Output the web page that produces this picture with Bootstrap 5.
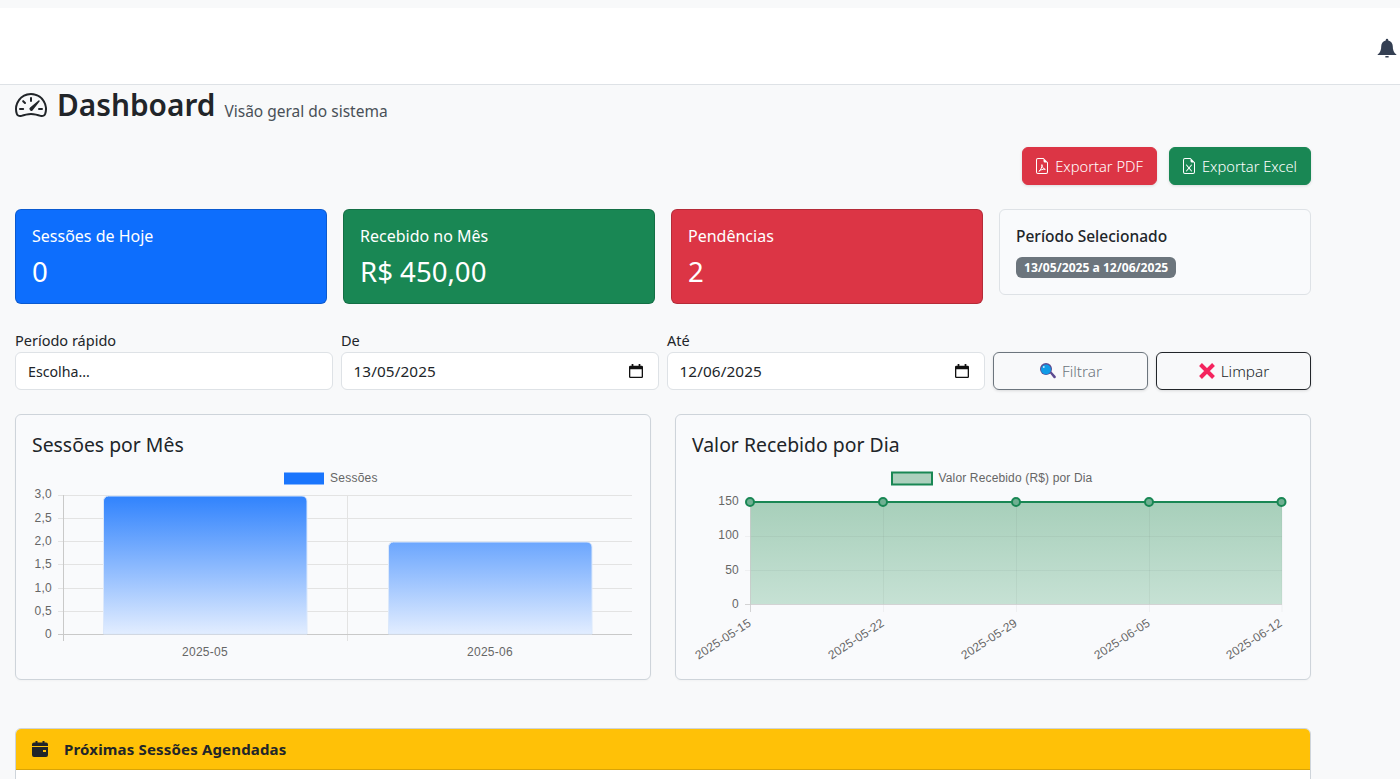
<!DOCTYPE html>
<html lang="pt-BR">
<head>
<meta charset="utf-8">
<title>Dashboard</title>
<link href="https://cdn.jsdelivr.net/npm/bootstrap@5.3.0/dist/css/bootstrap.min.css" rel="stylesheet">
<style>
html,body{height:779px;overflow:hidden}
body{background:#f8f9fa;font-family:"Noto Sans","Liberation Sans",sans-serif;color:#212529;padding-top:8px}
.topbar{height:77px;background:#fff;border-bottom:1px solid #dee2e6;padding-right:3px}
.bell-ic{width:20px;height:22px;fill:#343f52;margin-top:4px}
.page-wrap{width:1296px;margin-left:15px}
.page-head{height:32px;margin-top:4px;margin-bottom:26px}
.page-title{font-size:29.800px;font-weight:600;line-height:32px;margin:0}
.page-sub{font-size:15.500px;color:#495057;margin-left:9px;line-height:24px;align-self:flex-end;margin-bottom:-2px}
.dash-ic{width:32px;height:32px;margin-right:10px;fill:#212529}
.exp-btn{height:38px;font-size:14.700px;font-weight:300;padding:0 13px 0 11px;display:inline-flex;align-items:center;gap:5px;border-radius:6px;box-shadow:0 1px 3px rgba(0,0,0,.12)}
.exp-ic{width:16px;height:18px;fill:#fff}
.stat-name{font-size:16px;line-height:20px;margin-bottom:10px}
.stat-value{font-size:27.600px;line-height:31px}
.stat-plain{background:#f9fafc;border-color:#dee2e6}
.stat-plain .stat-name{font-size:15.500px;font-weight:500;margin-bottom:11px}
.date-pill{display:block;width:fit-content;height:21px;font-size:12.100px;font-weight:700;padding:4px 8px;border-radius:6px;line-height:13px}
.filter-row{margin-top:18px}
.field-label{font-size:14.500px;line-height:20px;margin-bottom:2px}
.field-box{height:38px;font-size:14.200px;color:#212529;background-color:#fff;padding:0 12px}
.date-box{font-size:15.300px;letter-spacing:.1px;padding-left:11.500px;background-image:url("data:image/svg+xml,%3Csvg xmlns='http://www.w3.org/2000/svg' viewBox='0 0 16 16'%3E%3Cpath fill='%23111' d='M3 0h2v2h6V0h2v2h1.5A1.5 1.5 0 0 1 16 3.5v11a1.5 1.5 0 0 1-1.500 1.500h-13A1.500 1.500 0 0 1 0 14.500v-11A1.500 1.500 0 0 1 1.500 2H3zM1.500 6v8.500h13V6z'/%3E%3C/svg%3E");background-repeat:no-repeat;background-position:right 15px center;background-size:14px}
.act-btn{height:38px;width:155px;font-size:15.300px;font-weight:300;padding:0;display:flex;align-items:center;justify-content:center;gap:5px;box-shadow:0 1px 3px rgba(0,0,0,.12)}
.act-ic{width:18px;height:18px}
.chart-row{margin-top:0}
.chart-box{background:#f9fafc;border-color:#ced4da;height:266px;box-shadow:0 1px 2px rgba(0,0,0,.03)}
.chart-title{font-size:19.400px;font-weight:400;line-height:28px;margin:0 0 7px}
.chart-svg{display:block;width:602px;height:197px;font-family:"Liberation Sans",sans-serif;font-size:12px;fill:#666;letter-spacing:.25px}
.legend-long{letter-spacing:.15px}
.next-card{margin-top:48px;height:200px;border-color:#ced4da}
.next-head{height:41px;background:#ffc107;font-size:15px;font-weight:700;letter-spacing:.17px;padding:0 16px;display:flex;align-items:center;gap:16px;border-bottom:1px solid #d9a406}
.cal-ic{width:16px;height:16px;fill:#212529}
</style>
</head>
<body>
<nav class="topbar d-flex justify-content-end align-items-center">
  <svg class="bell-ic" viewBox="0 0 16 16"><path d="M6.700 14.300h2.600v1.200H6.700zM8 .5a1 1 0 0 1 1 1v.4c2.200.5 3.600 2.300 3.600 4.500 0 3.200.8 5.300 2.900 6.800v.4H.5v-.4c2.100-1.500 2.900-3.600 2.900-6.800C3.400 4.200 4.800 2.400 7 1.900v-.4a1 1 0 0 1 1-1z"/></svg>
</nav>
<main class="page-wrap">
  <div class="page-head d-flex align-items-center">
    <svg class="dash-ic" viewBox="0 0 16 16"><path d="M8 4a.5.5 0 0 1 .5.5V6a.5.5 0 0 1-1 0V4.500A.5.5 0 0 1 8 4zM3.732 5.732a.5.5 0 0 1 .707 0l.915.914a.5.5 0 1 1-.708.708l-.914-.915a.5.5 0 0 1 0-.707zM2 10a.5.5 0 0 1 .5-.5h1.586a.5.5 0 0 1 0 1H2.500A.5.5 0 0 1 2 10zm9.500 0a.5.5 0 0 1 .5-.5h1.500a.5.5 0 0 1 0 1H12a.5.5 0 0 1-.5-.5zm.754-4.246a.389.389 0 0 0-.527-.020L7.547 9.310a.91.91 0 1 0 1.302 1.258l3.434-4.297a.389.389 0 0 0-.029-.518z"/><path d="M0 10a8 8 0 1 1 15.547 2.661c-.442 1.253-1.845 1.602-2.932 1.250C11.309 13.488 9.475 13 8 13c-1.474 0-3.310.488-4.615.911-1.087.352-2.490.003-2.932-1.250A7.988 7.988 0 0 1 0 10zm8-7a7 7 0 0 0-6.603 9.329c.203.575.923.876 1.680.630C4.397 12.533 6.358 12 8 12s3.604.532 4.923.96c.757.245 1.477-.056 1.680-.631A7 7 0 0 0 8 3z"/></svg>
    <h1 class="page-title">Dashboard</h1>
    <span class="page-sub">Visão geral do sistema</span>
  </div>
  <div class="d-flex justify-content-end gap-2 mb-4">
    <a class="btn btn-danger exp-btn me-1"><svg class="exp-ic" viewBox="0 0 16 16"><path d="M14 4.500V14a2 2 0 0 1-2 2H4a2 2 0 0 1-2-2V2a2 2 0 0 1 2-2h5.500L14 4.500zm-3 0A1.500 1.500 0 0 1 9.500 3V1H4a1 1 0 0 0-1 1v12a1 1 0 0 0 1 1h8a1 1 0 0 0 1-1V4.500h-2z"/><path d="M4.800 13.400C7 11.800 8.300 8.600 7.900 6.600 8 9 9.200 10.800 11.300 11.300 9 11 6.600 11.600 4.800 13.400z" fill="none" stroke="#fff" stroke-width="1"/></svg>Exportar PDF</a>
    <a class="btn btn-success exp-btn"><svg class="exp-ic" viewBox="0 0 16 16"><path d="M14 4.500V14a2 2 0 0 1-2 2H4a2 2 0 0 1-2-2V2a2 2 0 0 1 2-2h5.500L14 4.500zm-3 0A1.500 1.500 0 0 1 9.500 3V1H4a1 1 0 0 0-1 1v12a1 1 0 0 0 1 1h8a1 1 0 0 0 1-1V4.500h-2z"/><path d="M5.884 6.680a.5.5 0 1 0-.768.640L7.349 10l-2.233 2.680a.5.5 0 0 0 .768.640L8 10.781l2.116 2.540a.5.5 0 0 0 .768-.641L8.651 10l2.233-2.680a.5.5 0 0 0-.768-.640L8 9.219l-2.116-2.540z"/></svg>Exportar Excel</a>
  </div>
  <div class="row g-3 align-items-start">
    <div class="col-3"><div class="card text-bg-primary"><div class="card-body"><div class="stat-name">Sessões de Hoje</div><div class="stat-value">0</div></div></div></div>
    <div class="col-3"><div class="card text-bg-success"><div class="card-body"><div class="stat-name">Recebido no Mês</div><div class="stat-value">R$ 450,00</div></div></div></div>
    <div class="col-3"><div class="card text-bg-danger"><div class="card-body"><div class="stat-name">Pendências</div><div class="stat-value">2</div></div></div></div>
    <div class="col-3"><div class="card stat-plain"><div class="card-body"><div class="stat-name">Período Selecionado</div><span class="badge text-bg-secondary date-pill">13/05/2025 a 12/06/2025</span></div></div></div>
  </div>
  <form class="row g-2 align-items-end filter-row">
    <div class="col-3"><label class="field-label d-block">Período rápido</label><input class="form-control field-box" value="Escolha..."></div>
    <div class="col-3"><label class="field-label d-block">De</label><input class="form-control field-box date-box" value="13/05/2025"></div>
    <div class="col-3"><label class="field-label d-block">Até</label><input class="form-control field-box date-box" value="12/06/2025"></div>
    <div class="col-3 d-flex gap-2">
      <button type="button" class="btn btn-outline-secondary act-btn"><svg class="act-ic" viewBox="0 0 18 18"><path d="M10 10l1.500-1.500 5 5.500a1.200 1.200 0 0 1-2 1.800z" fill="#5c4a90"/><circle cx="7" cy="7" r="6" fill="#5c4a90"/><circle cx="7" cy="7.500" r="5" fill="#0f9be6"/><circle cx="4.800" cy="5" r=".9" fill="#cdeafc"/></svg>Filtrar</button>
      <button type="button" class="btn btn-outline-dark act-btn"><svg class="act-ic" viewBox="0 0 18 18"><path d="M2.500 2.500L15.500 15.500M15.500 2.500L2.500 15.500" stroke="#f4245e" stroke-width="4" stroke-linecap="butt"/></svg>Limpar</button>
    </div>
  </form>
  <div class="row g-4 chart-row">
    <div class="col-6"><div class="card chart-box"><div class="card-body">
      <h5 class="chart-title">Sessões por Mês</h5>
      <svg class="chart-svg" viewBox="32 466 602 197">
        <defs>
          <linearGradient id="barGrad" x1="0" y1="495" x2="0" y2="634" gradientUnits="userSpaceOnUse"><stop offset="0" stop-color="#2f82fd"/><stop offset="1" stop-color="#e2edff"/></linearGradient>
        </defs>
        <rect x="284" y="472.500" width="40" height="12" fill="#1a75fd"/>
        <text x="330" y="482">Sessões</text>
        <g stroke="#e3e3e3" stroke-width="1">
          <path d="M58 495.500H632M58 518.500H632M58 541.500H632M58 564.500H632M58 588.500H632M58 611.500H632"/>
          <path d="M347.500 495V641"/>
        </g>
        <path d="M63.500 495V641M58 634.500H632" stroke="#c9c9c9" fill="none"/>
        <path d="M103.500 634V501a5 5 0 0 1 5-5H302a5 5 0 0 1 5 5V634z" fill="url(#barGrad)" stroke="#dbe8fb"/>
        <path d="M388.500 634V547a5 5 0 0 1 5-5H587a5 5 0 0 1 5 5V634z" fill="url(#barGrad)" stroke="#dbe8fb"/>
        <g text-anchor="end">
          <text x="52" y="498">3,0</text><text x="52" y="522">2,5</text><text x="52" y="545">2,0</text><text x="52" y="568">1,5</text><text x="52" y="592">1,0</text><text x="52" y="615">0,5</text><text x="52" y="638">0</text>
        </g>
        <g text-anchor="middle">
          <text x="205" y="656">2025-05</text><text x="490" y="656">2025-06</text>
        </g>
      </svg>
    </div></div></div>
    <div class="col-6"><div class="card chart-box"><div class="card-body">
      <h5 class="chart-title">Valor Recebido por Dia</h5>
      <svg class="chart-svg" viewBox="692 466 602 197">
        <defs>
          <linearGradient id="areaGrad2" x1="0" y1="502" x2="0" y2="604" gradientUnits="userSpaceOnUse"><stop offset="0" stop-color="#a7cfba"/><stop offset="1" stop-color="#c6e1d4"/></linearGradient>
        </defs>
        <rect x="892" y="472.500" width="40" height="12" fill="#acd0bd" stroke="#198754" stroke-width="2"/>
        <text class="legend-long" x="938.500" y="482">Valor Recebido (R$) por Dia</text>
        <path d="M750 502H1282V604H750z" fill="url(#areaGrad2)"/>
        <g stroke="#000" stroke-opacity=".04">
          <path d="M745 536.500H1282M745 570.500H1282"/>
          <path d="M883.500 497V612M1016.500 497V612M1149.500 497V612M1282 497V612"/>
        </g>
        <path d="M750.500 497V612M745 604.500H1282" stroke="#c9c9c9" fill="none" stroke-opacity=".8"/>
        <path d="M750 502H1282" stroke="#198754" stroke-width="2"/>
        <g fill="#6fb092" stroke="#198754" stroke-width="2">
          <circle cx="750" cy="502" r="4"/><circle cx="883" cy="502" r="4"/><circle cx="1016" cy="502" r="4"/><circle cx="1149" cy="502" r="4"/><circle cx="1281.500" cy="502" r="4"/>
        </g>
        <g text-anchor="end">
          <text x="739" y="505">150</text><text x="739" y="539">100</text><text x="739" y="574">50</text><text x="739" y="608">0</text>
        </g>
        <g text-anchor="end">
          <text transform="translate(752 625) rotate(-33)">2025-05-15</text>
          <text transform="translate(885 625) rotate(-33)">2025-05-22</text>
          <text transform="translate(1018 625) rotate(-33)">2025-05-29</text>
          <text transform="translate(1151 625) rotate(-33)">2025-06-05</text>
          <text transform="translate(1283 625) rotate(-33)">2025-06-12</text>
        </g>
      </svg>
    </div></div></div>
  </div>
  <div class="card next-card overflow-hidden">
    <div class="next-head"><svg class="cal-ic" viewBox="0 0 16 16"><path d="M3.500 0h2v1.500h5V0h2v1.500H14A2 2 0 0 1 16 3.500V5H0V3.500a2 2 0 0 1 2-2h1.500zM0 6h16v8a2 2 0 0 1-2 2H2a2 2 0 0 1-2-2zm11 3v2h3V9z" fill-rule="evenodd"/></svg>Próximas Sessões Agendadas</div>
  </div>
</main>
<script src="https://cdn.jsdelivr.net/npm/bootstrap@5.3.0/dist/js/bootstrap.bundle.min.js"></script>
</body>
</html>
